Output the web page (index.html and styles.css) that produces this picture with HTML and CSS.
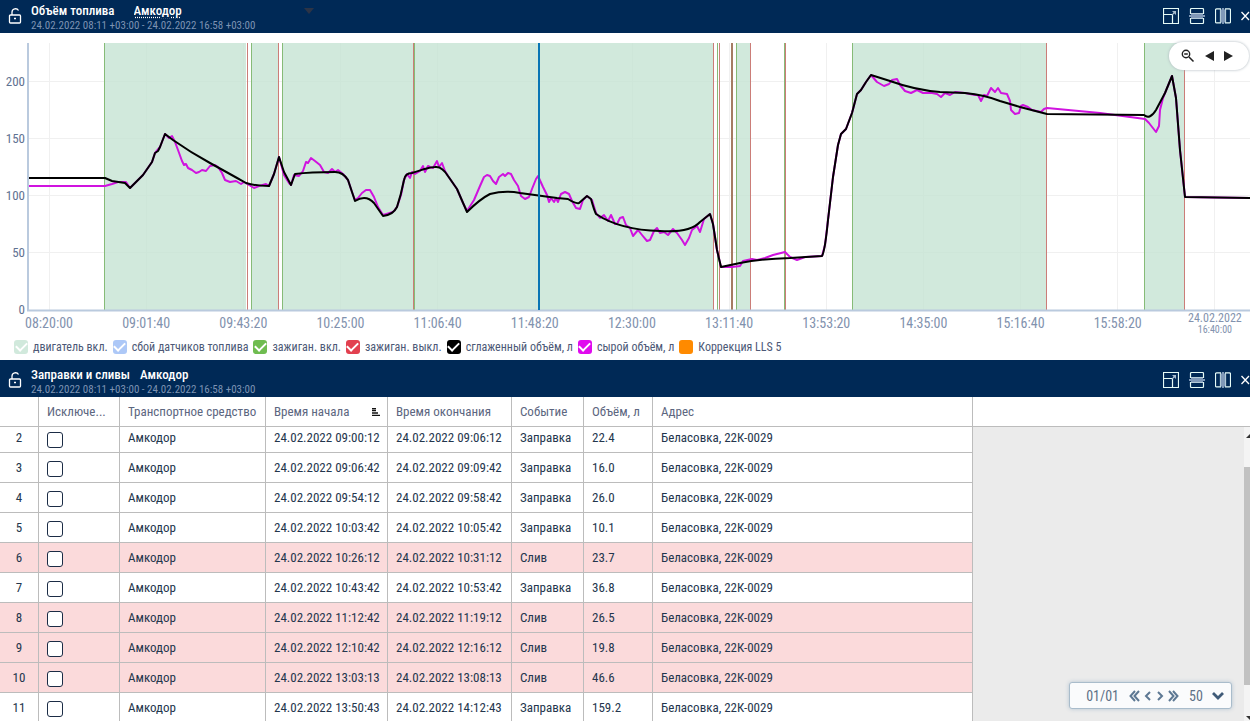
FILE: index.html
```html
<!DOCTYPE html>
<html lang="ru">
<head>
<meta charset="utf-8">
<title>Объём топлива</title>
<link rel="stylesheet" href="styles.css">
</head>
<body>
<svg class="sprite" aria-hidden="true">
  <symbol id="lock" viewBox="0 0 14 18"><path d="M4 8V5a3.500 3.500 0 0 1 6.500-1.500M2.500 8h9a1 1 0 0 1 1 1v6a1 1 0 0 1-1 1h-9a1 1 0 0 1-1-1V9a1 1 0 0 1 1-1zM6 11.500h2" fill="none" stroke="#fff" stroke-width="1.300"/></symbol>
  <symbol id="expand" viewBox="0 0 16 16"><path d="M.500 6V.500h15v15H10M.500 6.500h9v9h-9z" fill="none" stroke="#e6fbf7" stroke-width="1.200"/><path d="M9 3h4v4l-1.500-1.500L9 7.500 8.500 7 10.500 4.500z" fill="#a9bdd0"/></symbol>
  <symbol id="rows" viewBox="0 0 16 16"><path d="M1.500 6V1.500a1 1 0 0 1 1-1h11a1 1 0 0 1 1 1V6M1.500 10v4.500a1 1 0 0 0 1 1h11a1 1 0 0 0 1-1V10M2 5.500h12M2 10.500h12" fill="none" stroke="#e6fbf7" stroke-width="1.200"/><path d="M0 7h2V5.500h12V7h2v2h-2v1.500H2V9H0z" fill="#8099b8"/></symbol>
  <symbol id="columns" viewBox="0 0 16 16"><path d="M5.500.900h-4a1 1 0 0 0-1 1v12a1 1 0 0 0 1 1h4zM10.500.900h4a1 1 0 0 1 1 1v12a1 1 0 0 1-1 1h-4z" fill="none" stroke="#e6fbf7" stroke-width="1.200"/><path d="M7 0h2v1.500h1.500v13H9V16H7v-1.500H5.500v-13H7z" fill="#8099b8"/></symbol>
  <symbol id="close" viewBox="0 0 9 16"><path d="M.500 4l7.500 8M8 4L.500 12" stroke="#fff" stroke-width="1.300"/></symbol>
</svg>
<main class="app">
  <section class="chart-panel">
    <header class="bar bar-top">
      <svg class="lock"><use href="#lock"/></svg>
      <div class="bar-text">
        <div class="bar-line"><h2>Объём топлива</h2>
          <div class="vehicle"><select class="vehicle-select" aria-label="Транспортное средство"><option>Амкодор</option></select><svg class="caret" viewBox="0 0 10 6"><path d="M0 0h10L5 6z" fill="#2c3446"/></svg></div></div>
        <p class="period">24.02.2022 08:11 +03:00 - 24.02.2022 16:58 +03:00</p>
      </div>
      <div class="tools">
        <button aria-label="Развернуть"><svg><use href="#expand"/></svg></button>
        <button aria-label="Разделить по горизонтали"><svg><use href="#rows"/></svg></button>
        <button aria-label="Разделить по вертикали"><svg><use href="#columns"/></svg></button>
        <button class="close" aria-label="Закрыть"><svg><use href="#close"/></svg></button>
      </div>
    </header>
    <div class="chart">
      <div class="y-axis"><span>200</span><span>150</span><span>100</span><span>50</span><span>0</span></div>
      <svg class="plot" viewBox="27 43 1223 269" preserveAspectRatio="none" role="img" aria-label="График объёма топлива">
        <path class="grid" d="M49.500 43v267M146.500 43v267M243.500 43v267M340.500 43v267M437.500 43v267M535.500 43v267M632.500 43v267M729.500 43v267M826.500 43v267M923.500 43v267M1020.500 43v267M1117.500 43v267M1214.500 43v267M29 81.500h1221M29 138.500h1221M29 195.500h1221M29 252.500h1221"/>
        <g fill="#d1e9dc" fill-opacity=".8"><path d="M104 43h142v267H104zM251 43h27v267h-27zM282 43h431v267H282zM736 43h14v267h-14zM852 43h194v267H852zM1144 43h40v267h-40z" fill="#c5e4d3"/></g>
        <path class="on" d="M104.500 43v267M251.500 43v267M282.500 43v267M414.500 43v267M717.500 43v267M736.500 43v267M784.500 43v267M852.500 43v267M1144.500 43v267"/>
        <path class="off" d="M247.500 43v267M278.500 43v267M413.500 43v267M713.500 43v267M719.500 43v267M750.500 43v267M785.500 43v267M1046.500 43v267M1184.500 43v267"/>
        <path d="M732 43v267" stroke="#a57c63" stroke-width="2"/>
        <path d="M27 310.500h1223M28 43v268" stroke="#bacade" stroke-width="2"/>
        <polyline class="raw" points="29,186 105,186 112,184 118,182 126,182 130,188 143,175 152,162 155,153 160,147 165,134 169,138 172,136 175,142 178,150 182,161 184,165 186,164 188,168 192,170 196,173 199,172 202,170 206,171 210,166 215,165 218,167 222,173 225,180 230,182 236,181 241,184 244,182 249,185 254,188 259,186 266,184 269,186 274,174 279,157 284,175 289,183 291,185 294,175 299,176 303,171 306,162 308,163 311,158 315,161 320,165 324,172 328,173 332,169 335,172 338,170 343,174 348,180 352,192 355,200 358,198 362,193 366,190 370,190 374,197 378,207 383,215 393,212 397,207 401,195 404,180 407,174 410,178 412,172 415,174 420,171 423,166 425,172 428,166 430,167 433,168 437,161 439,167 442,163 445,171 448,176 457,189 463,203 467,211 474,200 480,186 484,177 487,175 490,176 493,181 496,184 499,177 503,174 505,176 508,173 511,174 514,180 518,186 521,196 525,199 529,197 532,189 536,179 538,176 543,187 547,195 549,202 551,198 554,202 556,198 558,202 561,194 565,192 569,194 572,201 576,208 580,209 583,200 587,196 592,200 596,213 600,218 604,215 608,221 611,215 615,224 617,224 620,218 623,217 626,225 630,228 633,236 638,230 642,235 647,241 650,240 654,231 657,228 660,233 664,232 668,235 673,229 677,233 682,240 685,245 689,238 692,230 697,226 700,232 704,219 710,214 713,224 717,250 721,267 732,267 740,266 743,261 752,259 757,260 765,258 773,255 785,252 790,257 797,260 805,257 822,256 825,245 828,220 833,177 838,145 841,134 846,129 852,113 857,94 861,90 866,82 871,75 877,82 884,86 889,84 892,80 897,79 900,85 905,91 911,93 917,90 923,93 932,93 937,94 941,97 945,93 950,95 955,92 965,93 975,95 978,95 981,101 984,95 987,96 991,88 995,92 998,88 1001,93 1007,94 1010,101 1011,110 1015,114 1019,113 1021,106 1023,105 1028,107 1032,110 1041,112 1044,109 1047,108 1100,113 1145,119 1149,123 1156,132 1159,126 1160,110 1163,98 1172,76 1176,98 1180,150 1185,197 1250,198"/>
        <path class="smooth" d="M29 178H105L112 181 125 183 130 188 143 175 152 162 155 153 158 151 160 147 165 134 173 140Q190 152 210 163T246 183Q256 186 269 186L274 174 279 157 284 172 291 185 295 174Q310 172 335 172 343 172 348 180L352 192 355 201Q366 194 374 203L383 216Q393 215 397 207 401 195 404 180 405 173 412 173 430 167 435 167 442 166 448 176L457 189 467 212Q480 199 490 194 505 190 520 193L557 198 568 199Q576 204 579 203L587 196 591 199Q594 210 596 214 620 230 660 231 690 233 700 222L710 214 713 224 717 250 721 267 740 263Q760 259 790 258L822 256Q825 251 828 220L833 177 838 145 841 134 846 129 852 113 857 94 861 90 866 82 871 75 890 81Q915 90 940 92L965 93Q985 95 1000 101L1020 107 1047 114 1144 115Q1150 120 1156 110L1165 93 1172 76 1176 98 1180 150 1185 197 1250 198"/>
        <path d="M539 43v267" stroke="#0875b4" stroke-width="2"/>
      </svg>
      <div class="x-axis"><span>08:20:00</span><span>09:01:40</span><span>09:43:20</span><span>10:25:00</span><span>11:06:40</span><span>11:48:20</span><span>12:30:00</span><span>13:11:40</span><span>13:53:20</span><span>14:35:00</span><span>15:16:40</span><span>15:58:20</span><span class="last-tick">24.02.2022<small>16:40:00</small></span></div>
      <div class="zoom-box">
        <button aria-label="Уменьшить"><svg viewBox="0 0 14 14" class="mag"><circle cx="5" cy="5" r="3.700" fill="none" stroke="#222" stroke-width="1.400"/><path d="M3.200 5h3.600M8 8l4.500 4.500" stroke="#222" stroke-width="1.500"/></svg></button>
        <button aria-label="Назад"><svg viewBox="0 0 9 10" class="arrow"><path d="M9 0v10L0 5z" fill="#222"/></svg></button>
        <button aria-label="Вперёд"><svg viewBox="0 0 9 10" class="arrow"><path d="M0 0v10l9-5z" fill="#222"/></svg></button>
      </div>
    </div>
    <div class="legend">
      <label><input type="checkbox" class="c-engine" checked>двигатель вкл.</label>
      <label><input type="checkbox" class="c-fault" checked>сбой датчиков топлива</label>
      <label><input type="checkbox" class="c-on" checked>зажиган. вкл.</label>
      <label><input type="checkbox" class="c-off" checked>зажиган. выкл.</label>
      <label><input type="checkbox" class="c-smooth" checked>сглаженный объём, л</label>
      <label><input type="checkbox" class="c-raw" checked>сырой объём, л</label>
      <label><input type="checkbox" class="c-lls">Коррекция LLS 5</label>
    </div>
  </section>
  <section class="table-panel">
    <header class="bar">
      <svg class="lock"><use href="#lock"/></svg>
      <div class="bar-text">
        <div class="bar-line"><h2>Заправки и сливы</h2><span class="vehicle-name">Амкодор</span></div>
        <p class="period">24.02.2022 08:11 +03:00 - 24.02.2022 16:58 +03:00</p>
      </div>
      <div class="tools">
        <button aria-label="Развернуть"><svg><use href="#expand"/></svg></button>
        <button aria-label="Разделить по горизонтали"><svg><use href="#rows"/></svg></button>
        <button aria-label="Разделить по вертикали"><svg><use href="#columns"/></svg></button>
        <button class="close" aria-label="Закрыть"><svg><use href="#close"/></svg></button>
      </div>
    </header>
    <div class="table-area">
      <table>
        <colgroup><col class="w-num"><col class="w-excl"><col class="w-vehicle"><col class="w-start"><col class="w-end"><col class="w-event"><col class="w-volume"><col class="w-address"></colgroup>
        <thead><tr><th></th><th>Исключе...</th><th>Транспортное средство</th><th><div class="sorted">Время начала<svg class="sort" viewBox="0 0 8 8"><path d="M0 .500h4M0 2.500h4M0 5h6M0 7.500h8" stroke="#111" stroke-width="1.300"/></svg></div></th><th>Время окончания</th><th>Событие</th><th>Объём, л</th><th>Адрес</th></tr></thead>
        <tbody>
          <tr class="first"><td>2</td><td><input type="checkbox" aria-label="Исключить 2"></td><td>Амкодор</td><td>24.02.2022 09:00:12</td><td>24.02.2022 09:06:12</td><td>Заправка</td><td>22.4</td><td>Беласовка, 22К-0029</td></tr>
          <tr><td>3</td><td><input type="checkbox" aria-label="Исключить 3"></td><td>Амкодор</td><td>24.02.2022 09:06:42</td><td>24.02.2022 09:09:42</td><td>Заправка</td><td>16.0</td><td>Беласовка, 22К-0029</td></tr>
          <tr><td>4</td><td><input type="checkbox" aria-label="Исключить 4"></td><td>Амкодор</td><td>24.02.2022 09:54:12</td><td>24.02.2022 09:58:42</td><td>Заправка</td><td>26.0</td><td>Беласовка, 22К-0029</td></tr>
          <tr><td>5</td><td><input type="checkbox" aria-label="Исключить 5"></td><td>Амкодор</td><td>24.02.2022 10:03:42</td><td>24.02.2022 10:05:42</td><td>Заправка</td><td>10.1</td><td>Беласовка, 22К-0029</td></tr>
          <tr class="drain"><td>6</td><td><input type="checkbox" aria-label="Исключить 6"></td><td>Амкодор</td><td>24.02.2022 10:26:12</td><td>24.02.2022 10:31:12</td><td>Слив</td><td>23.7</td><td>Беласовка, 22К-0029</td></tr>
          <tr><td>7</td><td><input type="checkbox" aria-label="Исключить 7"></td><td>Амкодор</td><td>24.02.2022 10:43:42</td><td>24.02.2022 10:53:42</td><td>Заправка</td><td>36.8</td><td>Беласовка, 22К-0029</td></tr>
          <tr class="drain"><td>8</td><td><input type="checkbox" aria-label="Исключить 8"></td><td>Амкодор</td><td>24.02.2022 11:12:42</td><td>24.02.2022 11:19:12</td><td>Слив</td><td>26.5</td><td>Беласовка, 22К-0029</td></tr>
          <tr class="drain"><td>9</td><td><input type="checkbox" aria-label="Исключить 9"></td><td>Амкодор</td><td>24.02.2022 12:10:42</td><td>24.02.2022 12:16:12</td><td>Слив</td><td>19.8</td><td>Беласовка, 22К-0029</td></tr>
          <tr class="drain"><td>10</td><td><input type="checkbox" aria-label="Исключить 10"></td><td>Амкодор</td><td>24.02.2022 13:03:13</td><td>24.02.2022 13:08:13</td><td>Слив</td><td>46.6</td><td>Беласовка, 22К-0029</td></tr>
          <tr><td>11</td><td><input type="checkbox" aria-label="Исключить 11"></td><td>Амкодор</td><td>24.02.2022 13:50:43</td><td>24.02.2022 14:12:43</td><td>Заправка</td><td>159.2</td><td>Беласовка, 22К-0029</td></tr>
        </tbody>
      </table>
      <div class="rest">
        <div class="rest-head"></div>
        <div class="rest-body">
          <div class="scroll"><svg viewBox="0 0 6 6"><path d="M2 5l4-4v4z" fill="#333"/></svg><div class="thumb"></div><svg viewBox="0 0 6 6"><path d="M2 1h4v4z" fill="#333"/></svg></div>
        </div>
      </div>
      <nav class="pager" aria-label="Страницы">
        <span>01/01</span>
        <div class="pages">
          <button aria-label="Первая"><svg viewBox="0 0 11 12"><path d="M6 1L1.500 6 6 11M10 1L5.500 6l4.500 5"/></svg></button>
          <button aria-label="Предыдущая"><svg viewBox="0 0 11 12"><path d="M8 2L4 6l4 4"/></svg></button>
          <button aria-label="Следующая"><svg viewBox="0 0 11 12"><path d="M3 2l4 4-4 4"/></svg></button>
          <button aria-label="Последняя"><svg viewBox="0 0 11 12"><path d="M1 1l4.500 5L1 11M5 1l4.500 5L5 11"/></svg></button>
        </div>
        <div class="size"><select aria-label="Строк на странице"><option>50</option></select><svg viewBox="0 0 14 9"><path d="M2 2l5 5 5-5" fill="none" stroke="#3f5a78" stroke-width="2.800"/></svg></div>
      </nav>
    </div>
  </section>
</main>
</body>
</html>
```
FILE: styles.css
```css
* { box-sizing: border-box; }
body {
  margin: 0;
  font: 13px/16px "Roboto Condensed", "Liberation Sans Narrow", Roboto, sans-serif;
  color: #24364d;
  background: #fff;
}
button, select, input { font: inherit; color: inherit; margin: 0; padding: 0; border: 0; background: none; }
h2, p { margin: 0; }
svg { display: block; }
.sprite { position: absolute; width: 0; height: 0; }
.app { display: flex; flex-direction: column; height: 100vh; overflow: hidden; }
.chart-panel { display: flex; flex-direction: column; }

.bar {
  display: flex;
  align-items: flex-start;
  height: 37px;
  padding: 7px 0 0 8px;
  background: #002956;
  color: #fff;
}
.bar-top { height: 33px; padding-top: 3px; }
.lock { width: 14px; height: 18px; margin: 4px 9px 0 0; }
.bar-text { flex: 1; }
.bar-line { display: flex; align-items: center; gap: 10px; height: 16px; }
.bar h2, .vehicle-name, .vehicle-select { font-size: 13px; line-height: 16px; font-weight: 500; }
.bar-top .bar-line { gap: 19px; }
.vehicle { display: flex; align-items: center; width: 180px; }
.vehicle-select { flex: 1; appearance: none; text-decoration: underline dotted; text-underline-offset: 2px; }
.caret { width: 10px; height: 6px; }
.period { font-size: 11px; line-height: 14px; color: #7d93b3; }
.tools { display: flex; gap: 10px; padding-top: 5px; }
.tools button, .tools svg { width: 16px; height: 16px; }
.tools .close, .tools .close svg { width: 9px; }

.chart {
  position: relative;
  display: grid;
  grid-template: auto 26px / 27px 1fr;
  padding-top: 10px;
}
.y-axis {
  grid-area: 1 / 1 / 3 / 2;
  display: flex;
  flex-direction: column;
  gap: 43px;
  padding: 32px 2px 0 0;
  text-align: right;
  line-height: 14px;
  color: #5f7292;
}
.plot { grid-area: 1 / 2; width: 100%; height: 269px; }
.plot path, .plot polyline { vector-effect: non-scaling-stroke; }
.grid { stroke: #f0f0f0; fill: none; }
.on { stroke: #86bb77; }
.off { stroke: #cb7d78; }
.raw { fill: none; stroke: #d013df; stroke-width: 2; stroke-linejoin: round; }
.smooth { fill: none; stroke: #000; stroke-width: 2; stroke-linejoin: round; }
.x-axis {
  grid-area: 2 / 1 / 3 / 3;
  display: flex;
  justify-content: space-between;
  align-items: flex-start;
  padding: 0 8px 0 22px;
  color: #8292ae;
}
.x-axis span { width: 54px; padding-top: 3px; text-align: center; font-size: 14px; line-height: 16px; }
.x-axis .last-tick { padding-top: 0; font-size: 12px; line-height: 12px; white-space: nowrap; }
.x-axis small { display: block; font-size: 10px; line-height: 12px; }
.zoom-box {
  position: absolute;
  top: 9px;
  right: 1px;
  display: flex;
  align-items: center;
  gap: 10px;
  height: 28px;
  padding: 0 16px 0 12px;
  border-radius: 14px;
  background: #fff;
  box-shadow: 0 0 3px #aab4bb;
}
.mag { width: 14px; height: 14px; }
.arrow { width: 9px; height: 10px; }

.legend { display: flex; gap: 5px; height: 22px; padding-left: 14px; white-space: nowrap; color: #4c5876; font-size: 12px; }
.legend label { display: flex; align-items: center; height: 18px; gap: 5px; }
.legend input { appearance: none; display: grid; place-items: center; width: 14px; height: 14px; border-radius: 3px; }
.legend input:checked::after {
  content: "";
  width: 9px;
  height: 5px;
  margin-bottom: 3px;
  border: solid #fff;
  border-width: 0 0 2px 2px;
  transform: rotate(-45deg);
}
.c-engine { background: #d1e9dc; }
.c-fault { background: #adc8f7; }
.c-on { background: #6fbc50; }
.c-off { background: #e2404f; }
.c-smooth { background: #000; }
.c-raw { background: #e00aee; }
.c-lls { background: #ff8a00; }

.table-panel { flex: 1; min-height: 0; display: flex; flex-direction: column; }
.table-area { position: relative; flex: 1; min-height: 0; display: flex; overflow: hidden; }
table { align-self: flex-start; width: 973px; table-layout: fixed; border-collapse: separate; border-spacing: 0; }
.w-num { width: 39px; }
.w-excl { width: 81px; }
.w-vehicle { width: 146px; }
.w-start { width: 122px; }
.w-end { width: 124px; }
.w-event { width: 72px; }
.w-volume { width: 69px; }
th, td {
  height: 30px;
  padding: 0 0 0 8px;
  border: solid #bcbcbc;
  border-width: 0 1px 1px 0;
  text-align: left;
  white-space: nowrap;
}
th { font-weight: 400; color: #5c6680; }
.sorted { display: flex; align-items: center; justify-content: space-between; padding-right: 7px; }
.sort { width: 8px; height: 8px; }
td:first-child { text-align: center; padding-left: 0; }
.first td { height: 26px; padding-bottom: 4px; }
.first td:nth-child(2) { padding-bottom: 2px; }
.drain td { background: #fbdadb; }
td:nth-child(2) { padding-top: 2px; }
td input {
  display: block;
  appearance: none;
  width: 16px;
  height: 16px;
  border: 1px solid #1b2c45;
  border-radius: 3px;
  background: #fff;
}
.rest { flex: 1; display: flex; flex-direction: column; }
.rest-head { height: 30px; border-bottom: 1px solid #bcbcbc; }
.rest-body { flex: 1; display: flex; justify-content: flex-end; background: #ebebeb; }
.scroll { display: flex; flex-direction: column; width: 6px; padding: 6px 0 0; background: #f4f4f4; }
.scroll svg { width: 6px; height: 6px; }
.thumb { flex: 1; margin: 28px 0 30px; background: #c1c1c1; }
.pager {
  position: absolute;
  right: 18px;
  bottom: 12px;
  display: flex;
  align-items: center;
  gap: 10px;
  height: 27px;
  padding: 0 6px 0 16px;
  border: 1px solid #a9bccb;
  border-radius: 3px;
  background: #fafbfc;
  box-shadow: 0 0 4px #b4c4d2;
  color: #5d7086;
  font-size: 14px;
}
.pages { display: flex; gap: 2px; }
.pages svg { width: 11px; height: 12px; fill: none; stroke: #5d7893; stroke-width: 2; }
.size { display: flex; align-items: center; gap: 8px; }
.size select { appearance: none; }
.size svg { width: 14px; height: 9px; }
```
